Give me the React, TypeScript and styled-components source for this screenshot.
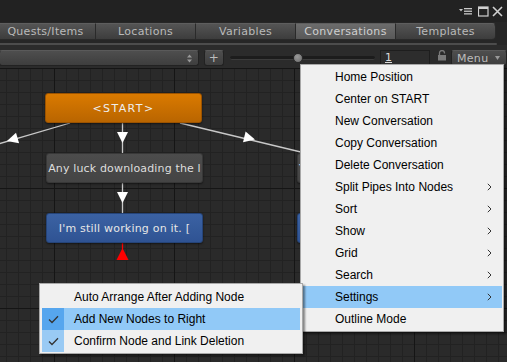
import React from "react";
import styled, { createGlobalStyle } from "styled-components";

const GlobalStyle = createGlobalStyle`
  html, body {
    margin: 0;
    padding: 0;
    background: #282828;
    overflow: hidden;
  }
`;

const Window = styled.div`
  position: relative;
  width: 507px;
  height: 362px;
  display: flex;
  flex-direction: column;
  background: #262626;
  overflow: hidden;
  font-family: "DejaVu Sans", sans-serif;
`;

const TitleBar = styled.div`
  height: 22px;
  flex: none;
  background: #222222;
  display: flex;
  justify-content: flex-end;
  align-items: center;
  padding-right: 4px;

  svg {
    display: block;
  }
`;

const TabRow = styled.div`
  display: flex;
  height: 17px;
  flex: none;
  margin-top: 1px;
  margin-left: -4px;
`;

const Tab = styled.div<{ $active?: boolean; $last?: boolean }>`
  width: 100px;
  box-sizing: border-box;
  display: flex;
  align-items: center;
  justify-content: center;
  font-size: 11px;
  letter-spacing: 0.3px;
  color: ${(p) => (p.$active ? "#cfcfcf" : "#bababa")};
  background: ${(p) =>
    p.$active
      ? "linear-gradient(#6c6c6c, #585858)"
      : "linear-gradient(#545454, #3d3d3d)"};
  border: 1px solid #2a2a2a;
  border-left: none;
  border-top-color: #5e5e5e;
  border-radius: ${(p) => (p.$last ? "0 4px 4px 0" : "0")};
`;

const Separator = styled.div`
  height: 2px;
  flex: none;
  margin: 3px 10px 0 0;
  background: #4c4c4c;
  border-radius: 0 2px 2px 0;
`;

const Toolbar = styled.div`
  height: 23px;
  flex: none;
  box-sizing: border-box;
  display: flex;
  align-items: flex-start;
  padding-top: 5px;
  background: #2b2b2b;
`;

const Control = styled.div<{ $w: number; $ml: number }>`
  width: ${(p) => p.$w}px;
  margin-left: ${(p) => p.$ml}px;
  height: 16px;
  box-sizing: border-box;
  flex: none;
  border: 1px solid #222;
  border-top-color: #5a5a5a;
  border-radius: 3px;
  background: linear-gradient(#4e4e4e, #3e3e3e);
  display: flex;
  align-items: center;
  color: #bcbcbc;
  font-size: 11px;
  letter-spacing: 0.3px;
`;

const Dropdown = styled(Control)`
  justify-content: flex-end;
  padding-right: 6px;
`;

const PlusButton = styled(Control)`
  justify-content: center;
  font-size: 12px;
`;

const Slider = styled.div`
  width: 145px;
  margin-left: 6px;
  height: 16px;
  flex: none;
  position: relative;
  display: flex;
  align-items: center;
`;

const Track = styled.div`
  flex: 1;
  height: 3px;
  border-radius: 2px;
  background: #1c1c1c;
  border-bottom: 1px solid #3c3c3c;
`;

const Knob = styled.div`
  position: absolute;
  left: 63px;
  top: 3px;
  width: 10px;
  height: 10px;
  border-radius: 50%;
  background: radial-gradient(circle at 40% 35%, #9a9a9a, #6a6a6a);
  border: 1px solid #2a2a2a;
  box-sizing: border-box;
`;

const NumberField = styled.div`
  width: 50px;
  margin-left: 5px;
  height: 16px;
  flex: none;
  box-sizing: border-box;
  background: #2d2d2d;
  border: 1px solid #1e1e1e;
  border-bottom-color: #3e3e3e;
  color: #dcdcdc;
  font-size: 11px;
  padding-left: 4px;
  line-height: 14px;
  text-decoration: underline;
`;

const LockBox = styled.div`
  width: 10px;
  margin-left: 7px;
  height: 16px;
  flex: none;

  svg {
    display: block;
  }
`;

const MenuButton = styled(Control)`
  justify-content: space-between;
  padding: 0 6px 0 5px;
`;

const Canvas = styled.div`
  flex: 1;
  position: relative;
  background-color: #2a2a2a;
  background-image: linear-gradient(90deg, #151515 1px, transparent 1px),
    linear-gradient(#151515 1px, transparent 1px),
    linear-gradient(90deg, #222222 1px, transparent 1px),
    linear-gradient(#222222 1px, transparent 1px);
  background-size: 120px 120px, 120px 120px, 12px 12px, 12px 12px;
  background-position: 54px 0, 54px 0, 6px 0, 6px 0;
`;

const Links = styled.svg`
  position: absolute;
  left: 0;
  top: 0;
  width: 100%;
  height: 100%;
  pointer-events: none;
`;

const nodeColors = {
  start: {
    bg: "linear-gradient(#da7a00, #b96500)",
    border: "#9c5300",
    text: "#eeeeee",
    spacing: "1.4px",
  },
  text: {
    bg: "linear-gradient(#4c4c4c, #444444)",
    border: "#383838",
    text: "#dedede",
    spacing: "0.15px",
  },
  npc: {
    bg: "linear-gradient(#3b62a3, #2f5393)",
    border: "#254479",
    text: "#e6e6e6",
    spacing: "0.2px",
  },
};

type NodeKind = keyof typeof nodeColors;

const Node = styled.div<{ $kind: NodeKind; $x: number; $y: number; $start?: boolean }>`
  position: absolute;
  left: ${(p) => p.$x}px;
  top: ${(p) => p.$y}px;
  width: 157px;
  height: 30px;
  box-sizing: border-box;
  border-radius: 3px;
  border: 1px solid ${(p) => nodeColors[p.$kind].border};
  background: ${(p) => nodeColors[p.$kind].bg};
  color: ${(p) => nodeColors[p.$kind].text};
  font-size: 11px;
  letter-spacing: ${(p) => nodeColors[p.$kind].spacing};
  display: flex;
  align-items: center;
  justify-content: ${(p) => (p.$start ? "flex-start" : "center")};
  padding-left: ${(p) => (p.$start ? "1px" : "0")};
  white-space: nowrap;
  overflow: hidden;
  box-shadow: 0 1px 2px rgba(0, 0, 0, 0.5);
`;

const Menu = styled.div`
  position: absolute;
  left: 300px;
  top: 64px;
  width: 200px;
  padding: 1px;
  background: #f0f0f0;
  border: 1px solid #a8a8a8;
  box-shadow: 2px 2px 2px rgba(0, 0, 0, 0.45);
  font-family: "Liberation Sans", Arial, sans-serif;
  font-size: 12px;
  color: #000;
  z-index: 2;
`;

const MenuItem = styled.div<{ $hl?: boolean }>`
  height: 22px;
  display: flex;
  align-items: center;
  justify-content: space-between;
  padding: 0 10px 0 33px;
  background: ${(p) => (p.$hl ? "#91c9f7" : "transparent")};

  svg {
    display: block;
  }
`;

const SubMenu = styled.div`
  position: absolute;
  left: 39px;
  top: 283px;
  width: 258px;
  padding: 2px 2px 1px 2px;
  background: #f0f0f0;
  border: 1px solid #a8a8a8;
  box-shadow: 2px 2px 2px rgba(0, 0, 0, 0.45);
  font-family: "Liberation Sans", Arial, sans-serif;
  font-size: 12px;
  color: #000;
  z-index: 3;
`;

const SubItem = styled.div<{ $hl?: boolean }>`
  height: 22px;
  display: flex;
  align-items: center;
  background: ${(p) => (p.$hl ? "#91c9f7" : "transparent")};
`;

const CheckCell = styled.div<{ $checked?: boolean; $hl?: boolean }>`
  width: 22px;
  height: 22px;
  margin-right: 10px;
  display: flex;
  align-items: center;
  justify-content: center;
  background: ${(p) =>
    !p.$checked ? "transparent" : p.$hl ? "#56a6ee" : "#99caf4"};
`;

const Chevron = () => (
  <svg width="5" height="8" viewBox="0 0 5 8">
    <path d="M0.8 0.8 L4 4 L0.8 7.2" fill="none" stroke="#333" strokeWidth="1" />
  </svg>
);

const Check = () => (
  <svg width="11" height="9" viewBox="0 0 11 9">
    <path d="M1 4.5 L4 7.5 L10 1.2" fill="none" stroke="#333" strokeWidth="1.3" />
  </svg>
);

function arrowHead(x1: number, y1: number, x2: number, y2: number, tx: number, ty: number, len = 11, half = 5.5) {
  const d = Math.hypot(x2 - x1, y2 - y1);
  const ux = (x2 - x1) / d;
  const uy = (y2 - y1) / d;
  const bx = tx - ux * len;
  const by = ty - uy * len;
  const px = -uy * half;
  const py = ux * half;
  return `${tx},${ty} ${bx + px},${by + py} ${bx - px},${by - py}`;
}

const tabs = ["Quests/Items", "Locations", "Variables", "Conversations", "Templates"];

const menuItems: { label: string; sub?: boolean; hl?: boolean }[] = [
  { label: "Home Position" },
  { label: "Center on START" },
  { label: "New Conversation" },
  { label: "Copy Conversation" },
  { label: "Delete Conversation" },
  { label: "Split Pipes Into Nodes", sub: true },
  { label: "Sort", sub: true },
  { label: "Show", sub: true },
  { label: "Grid", sub: true },
  { label: "Search", sub: true },
  { label: "Settings", sub: true, hl: true },
  { label: "Outline Mode" },
];

const settings = [
  { label: "Auto Arrange After Adding Node", checked: false, hl: false },
  { label: "Add New Nodes to Right", checked: true, hl: true },
  { label: "Confirm Node and Link Deletion", checked: true, hl: false },
];

const App = () => {
  return (
    <>
      <GlobalStyle />
      <Window>
        <TitleBar>
          <svg width="14" height="10" viewBox="0 0 14 10">
            <path d="M0 3 L4 3 L2 5.5 Z" fill="#c8c8c8" />
            <rect x="5" y="2" width="8" height="1.3" fill="#c8c8c8" />
            <rect x="5" y="4.6" width="8" height="1.3" fill="#c8c8c8" />
            <rect x="5" y="7.2" width="8" height="1.3" fill="#c8c8c8" />
          </svg>
          <svg width="11" height="11" viewBox="0 0 11 11" style={{ marginLeft: 5 }}>
            <rect x="0.5" y="1" width="9.5" height="9" fill="none" stroke="#d0d0d0" strokeWidth="1.2" />
            <rect x="0.5" y="1" width="9.5" height="2" fill="#d0d0d0" />
          </svg>
          <svg width="11" height="11" viewBox="0 0 11 11" style={{ marginLeft: 3 }}>
            <path d="M1 1 L10 10 M10 1 L1 10" stroke="#d0d0d0" strokeWidth="1.6" />
          </svg>
        </TitleBar>

        <TabRow>
          {tabs.map((t, i) => (
            <Tab key={t} $active={t === "Conversations"} $last={i === tabs.length - 1}>
              {t}
            </Tab>
          ))}
        </TabRow>
        <Separator />

        <Toolbar>
          <Dropdown $w={200} $ml={-1}>
            <svg width="5" height="9" viewBox="0 0 5 9">
              <path d="M0 3.5 L2.5 0.5 L5 3.5 Z M0 5.5 L2.5 8.5 L5 5.5 Z" fill="#9a9a9a" />
            </svg>
          </Dropdown>
          <PlusButton $w={20} $ml={5}>+</PlusButton>
          <Slider>
            <Track />
            <Knob />
          </Slider>
          <NumberField>1</NumberField>
          <LockBox>
            <svg width="10" height="11" viewBox="0 0 10 11">
              <path d="M2.5 5 V3 A2.5 2.5 0 0 1 7.5 3 V3.5" fill="none" stroke="#7a7a7a" strokeWidth="1.3" />
              <rect x="1" y="5" width="8" height="5.5" fill="#7a7a7a" />
            </svg>
          </LockBox>
          <MenuButton $w={56} $ml={4}>
            <span>Menu</span>
            <svg width="5" height="4" viewBox="0 0 5 4">
              <path d="M0 0 L5 0 L2.5 4 Z" fill="#9a9a9a" />
            </svg>
          </MenuButton>
        </Toolbar>

        <Canvas>
          <Links>
            <line x1="70" y1="55" x2="-5" y2="77" stroke="#c8c8c8" strokeWidth="1.3" />
            <polygon points={arrowHead(70, 55, -5, 77, 7, 73)} fill="#ffffff" />
            <line x1="180" y1="55" x2="305" y2="85" stroke="#c8c8c8" strokeWidth="1.3" />
            <polygon points={arrowHead(180, 55, 305, 85, 255, 71.5)} fill="#ffffff" />
            <line x1="122.5" y1="55" x2="122.5" y2="85" stroke="#c8c8c8" strokeWidth="1.3" />
            <polygon points={arrowHead(122.5, 55, 122.5, 85, 122.5, 75)} fill="#ffffff" />
            <line x1="122.5" y1="115" x2="122.5" y2="145" stroke="#c8c8c8" strokeWidth="1.3" />
            <polygon points={arrowHead(122.5, 115, 122.5, 145, 122.5, 135)} fill="#ffffff" />
            <line x1="122.5" y1="175" x2="122.5" y2="181" stroke="#ff0000" strokeWidth="1.3" />
            <polygon points="122.5,180 116.5,192 128.5,192" fill="#ff0000" />
          </Links>
          <Node $kind="start" $x={45} $y={25}>&lt;START&gt;</Node>
          <Node $kind="text" $x={46} $y={85}>Any luck downloading the l</Node>
          <Node $kind="npc" $x={46} $y={145}>I'm still working on it. [</Node>
          <Node $kind="text" $x={297} $y={85} $start>Y</Node>
          <Node $kind="npc" $x={297} $y={145} />
        </Canvas>

        <Menu>
          {menuItems.map((m) => (
            <MenuItem key={m.label} $hl={m.hl}>
              <span>{m.label}</span>
              {m.sub && <Chevron />}
            </MenuItem>
          ))}
        </Menu>

        <SubMenu>
          {settings.map((s) => (
            <SubItem key={s.label} $hl={s.hl}>
              <CheckCell $checked={s.checked} $hl={s.hl}>
                {s.checked && <Check />}
              </CheckCell>
              <span>{s.label}</span>
            </SubItem>
          ))}
        </SubMenu>
      </Window>
    </>
  );
};

export default App;
